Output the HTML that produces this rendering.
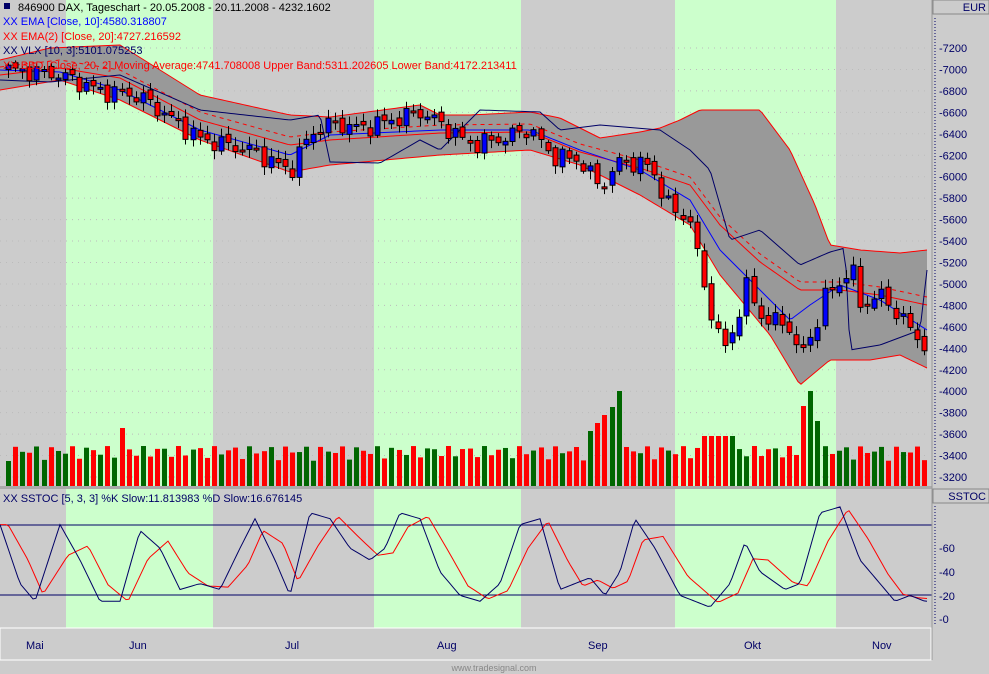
<!DOCTYPE html><html><head><meta charset="utf-8"><style>
body{margin:0;background:#ccc;width:989px;height:674px;overflow:hidden;font-family:"Liberation Sans",sans-serif}
svg{position:absolute;left:0;top:0}
</style></head><body>
<svg id="s" width="989" height="674" xmlns="http://www.w3.org/2000/svg" font-family="Liberation Sans, sans-serif" font-size="11">
<rect x="0" y="0" width="989" height="674" fill="#cccccc"/>
<g fill="#ccffcc"><rect x="66" y="0" width="147" height="628"/><rect x="374" y="0" width="147" height="628"/><rect x="675" y="0" width="161" height="628"/></g>
<g id="grid"></g>
<g id="band"></g>
<g id="lines"></g>
<g id="candles"></g>
<g id="vol"></g>
<rect x="0" y="486" width="932" height="3" fill="#aaa"/>
<line x1="0" y1="525" x2="932" y2="525" stroke="#000066"/>
<line x1="0" y1="595" x2="932" y2="595" stroke="#000066"/>
<g id="stoch"></g>
<rect x="932" y="0" width="57" height="674" fill="#cccccc"/>
<line x1="932" y1="0" x2="932" y2="660" stroke="#999"/>
<rect x="933" y="0" width="56" height="14" fill="#ccc" stroke="#888"/>
<text x="986" y="11" text-anchor="end" fill="#000066" font-size="11">EUR</text>
<rect x="933" y="489" width="56" height="14" fill="#ccc" stroke="#888"/>
<text x="986" y="500" text-anchor="end" fill="#000066" font-size="11">SSTOC</text>
<line x1="935" y1="18" x2="935" y2="485" stroke="#000066" stroke-dasharray="1,2"/>
<line x1="935" y1="506" x2="935" y2="625" stroke="#000066" stroke-dasharray="1,2"/>
<g id="axis" fill="#000066" font-size="11"></g>
<text x="939" y="552" fill="#000066">-60</text><text x="939" y="576" fill="#000066">-40</text><text x="939" y="600" fill="#000066">-20</text><text x="939" y="623" fill="#000066">-0</text>
<rect x="0" y="628" width="931" height="32" fill="#ccc" stroke="#fff"/>
<g fill="#000066" font-size="11"><text x="26" y="649">Mai</text><text x="129" y="649">Jun</text><text x="285" y="649">Jul</text><text x="437" y="649">Aug</text><text x="588" y="649">Sep</text><text x="744" y="649">Okt</text><text x="872" y="649">Nov</text></g>
<text x="494" y="671" text-anchor="middle" fill="#888" font-size="9">www.tradesignal.com</text>
<rect x="4" y="3" width="6" height="6" fill="#000066"/>
<text x="18" y="11" fill="#000">846900  DAX, Tageschart - 20.05.2008 - 20.11.2008 - 4232.1602</text>
<text x="3" y="25" fill="#0000ff">XX EMA [Close, 10]:4580.318807</text>
<text x="3" y="40" fill="#ff0000">XX EMA(2) [Close, 20]:4727.216592</text>
<text x="3" y="54" fill="#000066">XX VLX [10, 3]:5101.075253</text>
<text x="3" y="69" fill="#ff0000">XX BBD [Close, 20, 2] Moving Average:4741.708008 Upper Band:5311.202605 Lower Band:4172.213411</text>
<text x="3" y="502" fill="#000066">XX SSTOC [5, 3, 3] %K Slow:11.813983 %D Slow:16.676145</text>
</svg>
<script>
const NS="http://www.w3.org/2000/svg";
function el(p,t,a){const e=document.createElementNS(NS,t);for(const k in a)e.setAttribute(k,a[k]);document.getElementById(p).appendChild(e);return e}
function Y(p){return 48+(7200-p)*0.10725}
function interp(kp,x){for(let i=0;i<kp.length-1;i++){if(x<=kp[i+1][0]){const [x0,y0]=kp[i],[x1,y1]=kp[i+1];return y0+(y1-y0)*(x-x0)/(x1-x0)}}return kp[kp.length-1][1]}
for(let p=3200;p<=7200;p+=200){const y=Y(p);el("axis","text",{x:939,y:y+4}).textContent="-"+p;el("grid","line",{x1:0,y1:y,x2:930,y2:y,stroke:"#bbb","stroke-dasharray":"1,5"})}
const up=[[0,60],[50,48],[120,45],[200,95],[290,115],[330,117],[420,105],[440,115],[470,115],[530,112],[560,118],[600,138],[640,132],[660,128],[680,120],[700,110],[760,110],[790,150],[815,205],[830,245],[860,250],[900,253],[927,250]];
const lo=[[0,90],[60,80],[120,100],[200,140],[290,172],[330,165],[440,155],[530,150],[580,165],[640,195],[690,225],[720,275],[770,335],[800,385],[830,360],[870,360],[900,355],[927,368]];
let d="M0,"+interp(up,0);for(let x=0;x<=927;x+=3)d+=" L"+x+","+interp(up,x);for(let x=927;x>=0;x-=3)d+=" L"+x+","+interp(lo,x);
el("band","path",{d:d+"Z",fill:"#999999"});
function line(kp,col,dash,off){let s="";for(let x=0;x<=927;x+=3)s+=(s?" L":"M")+x+","+(interp(kp,x)+(off||0));el("lines","path",{d:s,fill:"none",stroke:col,"stroke-dasharray":dash||"none"})}
line(up,"#ff0000");line(lo,"#ff0000");
const cl=[[8,7000],[60,6950],[100,6800],[140,6750],[200,6350],[250,6250],[290,6050],[310,6400],[330,6500],[360,6450],[400,6550],[420,6600],[440,6500],[470,6300],[500,6350],[530,6450],[550,6200],[580,6150],[600,5900],[620,6150],[650,6100],[670,5700],[690,5600],[700,5100],[715,4600],[725,4400],[735,4600],[745,5000],[760,4700],[790,4600],[800,4300],[815,4600],[825,4900],[840,5000],[850,5200],[860,4800],[880,4900],[900,4700],[920,4450]];
const ma=[[0,75],[60,68],[120,78],[200,120],[290,145],[330,140],[440,133],[530,132],[580,152],[640,168],[690,185],[720,225],[760,262],[800,290],[840,290],[880,295],[927,305]];
line(ma,"#ff0000");line(ma,"#ff0000","4,4",-8);
const ema=[[0,70],[60,72],[120,90],[200,130],[290,155],[330,135],[440,130],[530,130],[580,150],[640,170],[690,200],[720,250],[760,290],[790,320],[810,305],[840,285],[880,300],[927,330]];
line(ema,"#0000ff");
const vlx=[[0,80],[50,82],[120,75],[200,110],[290,120],[320,115],[330,162],[380,163],[420,140],[440,150],[480,110],[540,112],[560,130],[600,125],[660,130],[690,150],[710,170],[730,240],[760,230],[800,265],[830,252],[845,248],[850,350],[880,345],[920,330],[927,270]];
line(vlx,"#000066");
let i=0;let prev=7000;
for(let x=8;x<=926;x+=7.1,i++){const c=interp(cl,x)+Math.sin(i*1.7)*60+Math.cos(i*2.9)*40;const o=prev+Math.sin(i*2.3)*30;const hi=Math.max(o,c)+20+Math.abs(Math.sin(i*3.1))*60,lw=Math.min(o,c)-20-Math.abs(Math.cos(i*1.3))*60;
const xc=Math.round(x);el("candles","line",{x1:xc+.5,y1:Y(hi),x2:xc+.5,y2:Y(lw),stroke:"#000"});
const yt=Y(Math.max(o,c)),yb=Y(Math.min(o,c));el("candles","rect",{x:xc-2,y:yt,width:5,height:Math.max(2,yb-yt),fill:c>=o?"#0000ff":"#ff0000",stroke:"#000","stroke-width":1});
let h=25+Math.abs(Math.sin(i*1.9))*15;if(i>=82&&i<=86)h=55+(i-82)*8;if(i==86)h=95;if(i>=98&&i<=102)h=50;if(i==112)h=80;if(i==113)h=95;if(i==114)h=65;if(i==16)h=58;
el("vol","rect",{x:xc-2,y:486-h,width:5,height:h,fill:c>=o?"#006600":"#ff0000"});prev=c}
const k=[[0,80],[20,30],[35,15],[60,80],[80,50],[100,15],[120,15],[140,75],[160,60],[180,25],[200,30],[220,25],[240,60],[255,85],[275,50],[290,20],[310,90],[330,85],[350,60],[370,50],[385,60],[400,90],[420,85],[440,40],[460,20],[480,15],[500,30],[520,80],[540,85],[560,25],[575,30],[590,35],[605,20],[620,40],[635,85],[655,60],[680,20],[710,10],[730,30],[745,65],[760,40],[785,25],[800,30],[820,90],[840,95],[860,50],[880,30],[895,15],[910,20],[925,15]];
function sy(v){return 619-v*1.18}
function sl(kp,col,sh){let s="";for(let x=0;x<=927;x+=3)s+=(s?" L":"M")+x+","+sy(interp(kp,Math.max(0,x-sh)));el("stoch","path",{d:s,fill:"none",stroke:col})}
const dd=k.map((p,j)=>[p[0],j>0?(p[1]*0.6+k[j-1][1]*0.4):p[1]]);
sl(dd,"#ff0000",8);sl(k,"#000066",0);
</script>
</body></html>
